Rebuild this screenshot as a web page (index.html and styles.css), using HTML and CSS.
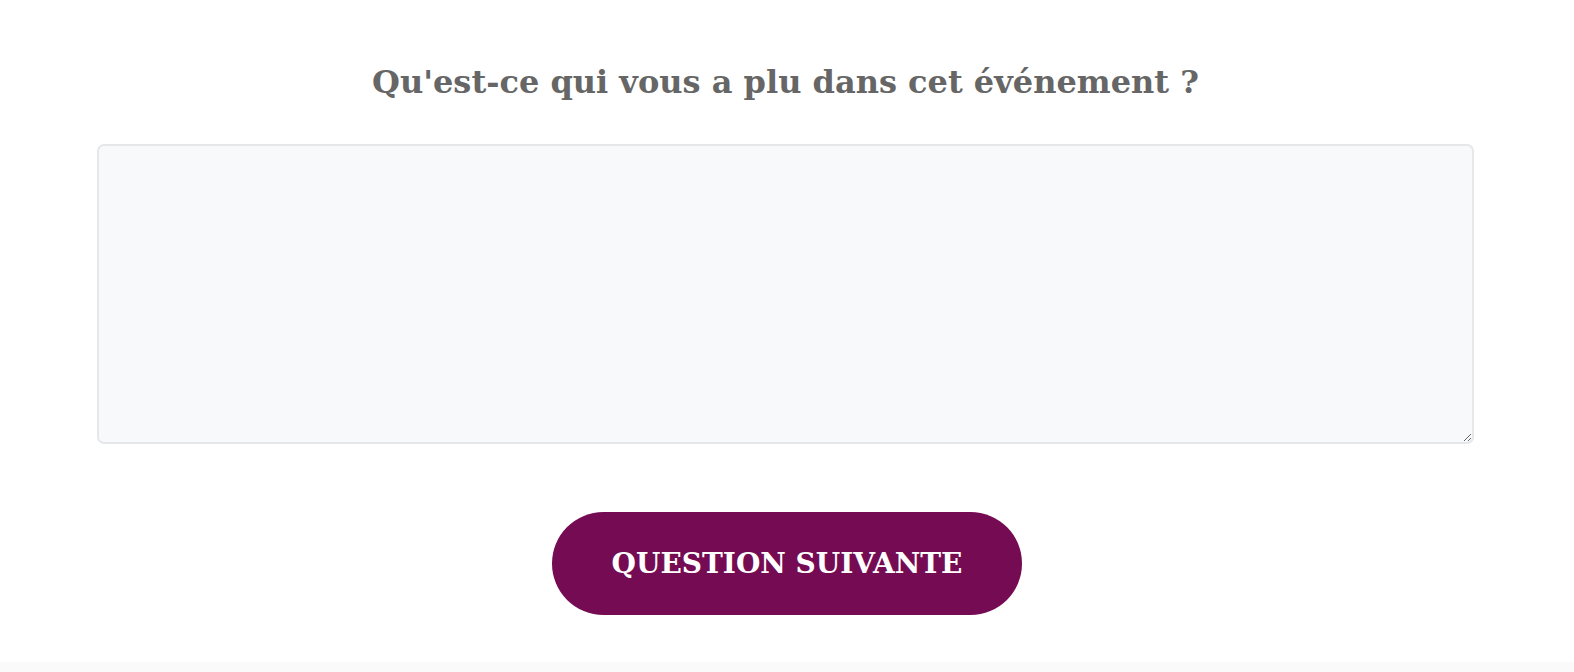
FILE: index.html
```html
<!DOCTYPE html>
<html lang="fr">
<head>
  <meta charset="UTF-8">
  <meta name="viewport" content="width=device-width, initial-scale=1.0">
  <title>Question</title>
  <link rel="stylesheet" href="styles.css">
</head>
<body>
  <main class="survey">
    <h2 class="question">Qu'est-ce qui vous a plu dans cet événement ?</h2>
    <textarea class="answer"></textarea>
    <div class="actions">
      <button class="next-btn">QUESTION SUIVANTE</button>
    </div>
  </main>
  <div class="page-bottom"></div>
</body>
</html>
```

FILE: styles.css
```css
body {
  margin: 0;
  padding: 0;
  background: #fff;
  font-family: "DejaVu Serif", "Liberation Serif", serif;
}

.survey {
  padding: 0 100px 0 97px;
  height: 662px;
  box-sizing: border-box;
}

.question {
  margin: 0 0 40px;
  padding-top: 60px;
  text-align: center;
  font-size: 32px;
  font-weight: bold;
  color: #666;
  line-height: 44px;
}

.answer {
  display: block;
  width: 100%;
  height: 300px;
  margin: 0;
  box-sizing: border-box;
  background: #f8f9fb;
  border: 2px solid #e5e7eb;
  border-radius: 7px;
  resize: vertical;
}

.actions {
  text-align: center;
  margin-top: 68px;
  padding-left: 3px;
}

.next-btn {
  width: 470px;
  height: 103px;
  border: none;
  border-radius: 52px;
  background: #750b52;
  color: #fff;
  font-family: inherit;
  font-size: 28px;
  font-weight: bold;
  cursor: pointer;
}

.page-bottom {
  height: 10px;
  background: #fafafa;
}
```
